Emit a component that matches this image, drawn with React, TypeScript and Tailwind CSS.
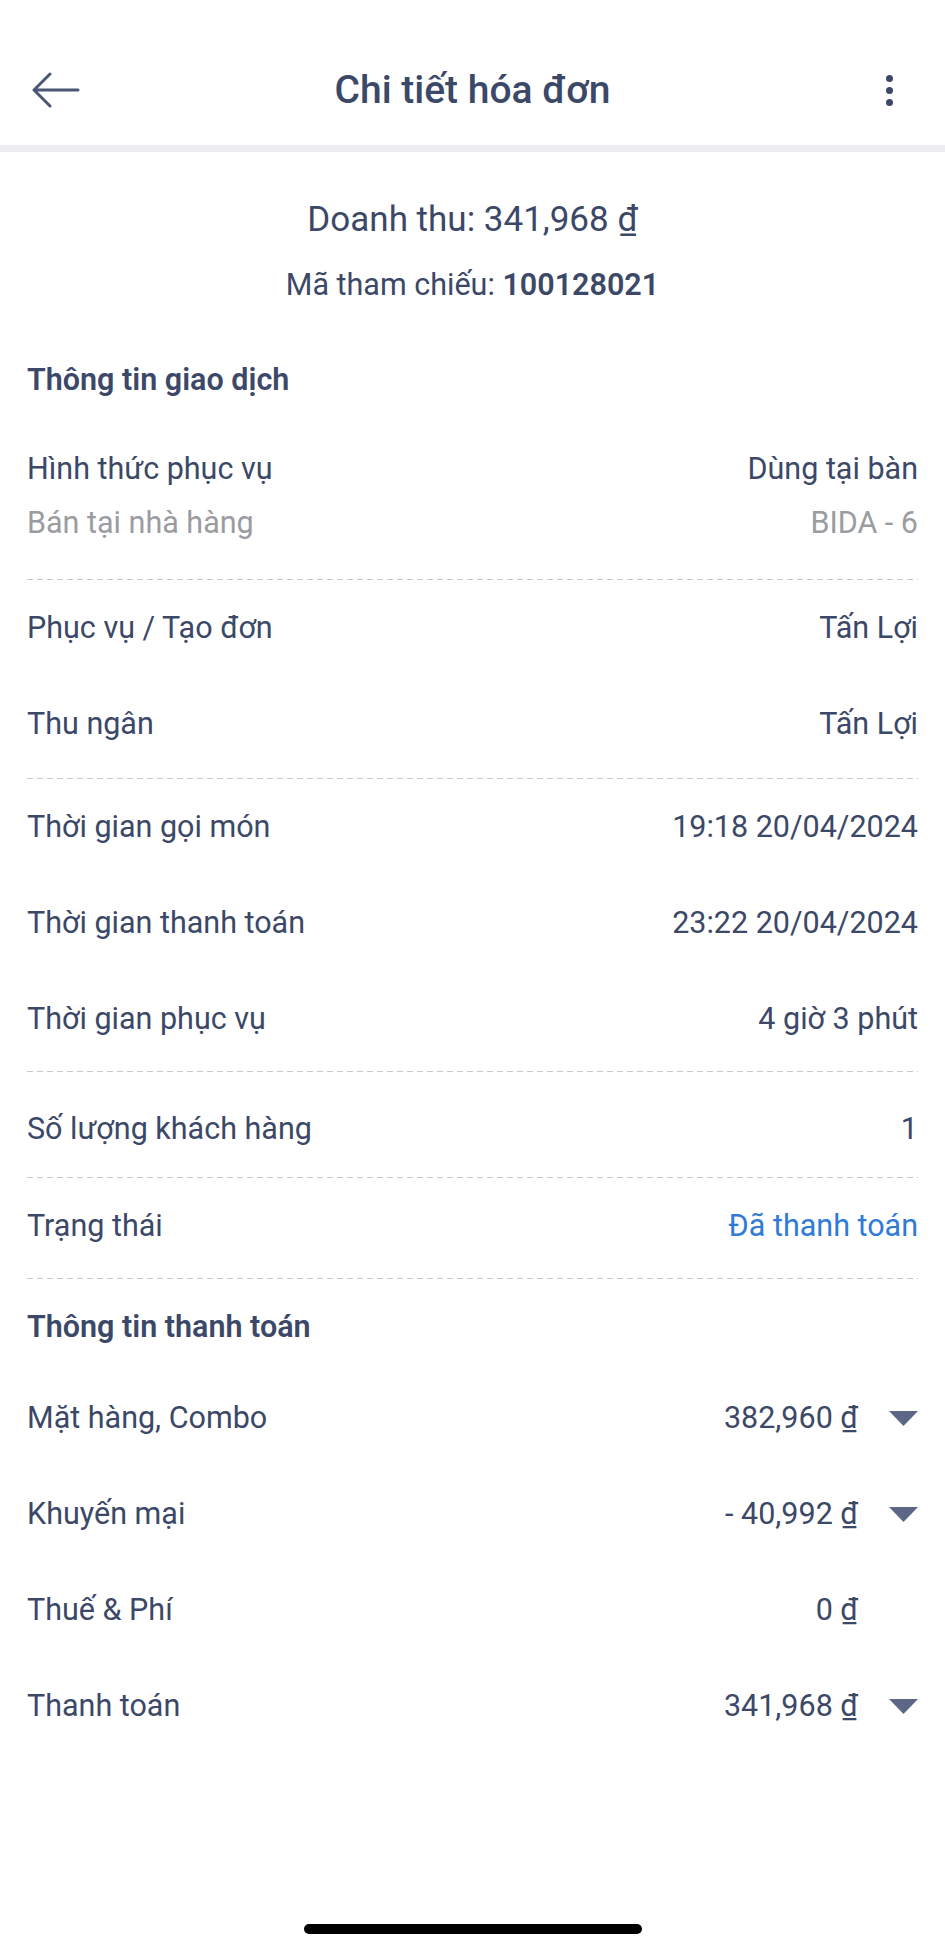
const ink = 'text-[#3c4867]';

type Row = { label: string; value: string; blue?: boolean };

function Dash() {
  return <div className="h-px w-full bg-[repeating-linear-gradient(to_right,#c6c8cf_0_6px,transparent_6px_10px)]" />;
}

function InfoRow({ label, value, blue }: Row) {
  return (
    <div className="flex h-[96px] items-center justify-between">
      <span className={`text-[30.5px] leading-[40px] ${ink}`}>{label}</span>
      <span className={`text-[30.5px] leading-[40px] ${blue ? 'text-[#2f7bd6]' : ink}`}>{value}</span>
    </div>
  );
}

function Group({ rows, pad = 'pb-[6px]' }: { rows: Row[]; pad?: string }) {
  return (
    <div>
      <Dash />
      <div className={pad}>
        {rows.map((r) => (
          <InfoRow key={r.label} {...r} />
        ))}
      </div>
    </div>
  );
}

function Caret() {
  return (
    <svg width="29" height="15" viewBox="0 0 29 15" className="ml-[31px]">
      <path d="M0 0 H29 L14.5 15 Z" fill="#5b6784" />
    </svg>
  );
}

function PayRow({ label, value, caret = true }: { label: string; value: string; caret?: boolean }) {
  return (
    <div className="flex h-[96px] items-center justify-between">
      <span className={`text-[30.5px] leading-[40px] ${ink}`}>{label}</span>
      <div className="flex items-center">
        <span className={`text-[30.5px] leading-[40px] ${ink}`}>{value}</span>
        {caret ? <Caret /> : <span className="ml-[31px] w-[29px]" />}
      </div>
    </div>
  );
}

export default function App() {
  return (
    <div
      className="flex min-h-[1953px] flex-col bg-white"
      style={{ fontFamily: 'Roboto, "Noto Sans", sans-serif' }}
    >
      {/* header */}
      <div className="flex h-[145px] items-end pb-[25px]">
        <div className="flex h-[60px] w-full items-center justify-between pl-[32px] pr-[30px]">
          <svg width="48" height="36" viewBox="0 0 48 36" fill="none">
            <path d="M2 18 H46 M18 2 L2 18 L18 34" stroke="#4a5673" strokeWidth="3" strokeLinecap="round" strokeLinejoin="round" />
          </svg>
          <h1 className={`text-[39px] font-medium ${ink}`}>Chi tiết hóa đơn</h1>
          <div className="flex w-[50px] flex-col items-end gap-[5px] pr-[22px]">
            <span className="h-[7px] w-[7px] rounded-full bg-[#3c4867]" />
            <span className="h-[7px] w-[7px] rounded-full bg-[#3c4867]" />
            <span className="h-[7px] w-[7px] rounded-full bg-[#3c4867]" />
          </div>
        </div>
      </div>
      <div className="h-[7px] bg-[#ededf2]" />

      {/* summary */}
      <div className="flex flex-col items-center pt-[48px]">
        <p className={`text-[35px] leading-[40px] ${ink}`}>Doanh thu: 341,968 ₫</p>
        <p className={`mt-[25px] text-[30.5px] leading-[40px] ${ink}`}>
          Mã tham chiếu: <span className="font-semibold">100128021</span>
        </p>
      </div>

      <div className="px-[27px]">
        <h2 className={`mt-[55px] text-[30.5px] font-semibold leading-[40px] ${ink}`}>Thông tin giao dịch</h2>

        <div className="mt-[49px] pb-[36px]">
          <div className="flex items-center justify-between">
            <span className={`text-[30.5px] leading-[40px] ${ink}`}>Hình thức phục vụ</span>
            <span className={`text-[30.5px] leading-[40px] ${ink}`}>Dùng tại bàn</span>
          </div>
          <div className="mt-[14px] flex items-center justify-between text-[30.5px] leading-[40px] text-[#9a9ca1]">
            <span>Bán tại nhà hàng</span>
            <span>BIDA - 6</span>
          </div>
        </div>

        <Group
          rows={[
            { label: 'Phục vụ / Tạo đơn', value: 'Tấn Lợi' },
            { label: 'Thu ngân', value: 'Tấn Lợi' },
          ]}
        />
        <Group
          pad="pb-[4px]"
          rows={[
            { label: 'Thời gian gọi món', value: '19:18 20/04/2024' },
            { label: 'Thời gian thanh toán', value: '23:22 20/04/2024' },
            { label: 'Thời gian phục vụ', value: '4 giờ 3 phút' },
          ]}
        />
        <Group pad="pt-[9px]" rows={[{ label: 'Số lượng khách hàng', value: '1' }]} />
        <Group pad="pb-[4px]" rows={[{ label: 'Trạng thái', value: 'Đã thanh toán', blue: true }]} />

        <Dash />
        <h2 className={`mt-[28px] text-[30.5px] font-semibold leading-[40px] ${ink}`}>Thông tin thanh toán</h2>
        <div className="mt-[23px]">
          <PayRow label="Mặt hàng, Combo" value="382,960 ₫" />
          <PayRow label="Khuyến mại" value="- 40,992 ₫" />
          <PayRow label="Thuế & Phí" value="0 ₫" caret={false} />
          <PayRow label="Thanh toán" value="341,968 ₫" />
        </div>
      </div>

      {/* home indicator */}
      <div className="mt-auto flex justify-center pb-[19px]">
        <div className="h-[10px] w-[338px] rounded-full bg-black" />
      </div>
    </div>
  );
}
